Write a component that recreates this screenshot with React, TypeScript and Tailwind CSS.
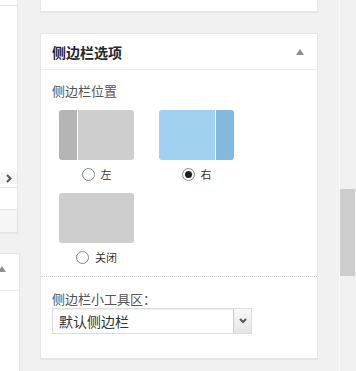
import React from "react";

function Radio({ checked }: { checked?: boolean }) {
  return (
    <span className="flex h-[13px] w-[13px] shrink-0 items-center justify-center rounded-full border border-[#7e8993] bg-white">
      {checked && <span className="h-[7px] w-[7px] rounded-full bg-[#1e1e1e]" />}
    </span>
  );
}

function Option({
  label,
  checked,
  variant,
}: {
  label: string;
  checked?: boolean;
  variant: "left" | "right" | "none";
}) {
  return (
    <div className="flex w-[75px] flex-col items-center">
      {variant === "left" && (
        <div className="flex h-[50px] w-[75px] overflow-hidden rounded-[3px]">
          <div className="w-[18px] bg-[#b4b4b4]" />
          <div className="w-[1px] bg-white" />
          <div className="flex-1 bg-[#cecece]" />
        </div>
      )}
      {variant === "right" && (
        <div className="flex h-[50px] w-[75px] overflow-hidden rounded-[3px]">
          <div className="flex-1 bg-[#a0d1f0]" />
          <div className="w-[1px] bg-white" />
          <div className="w-[18px] bg-[#85b9db]" />
        </div>
      )}
      {variant === "none" && <div className="h-[50px] w-[75px] rounded-[3px] bg-[#cecece]" />}
      <div className="mt-[6px] flex h-[16px] items-center gap-[6px]">
        <Radio checked={checked} />
        <span className="text-[11px] leading-[16px] text-[#333]">{label}</span>
      </div>
    </div>
  );
}

export default function App() {
  return (
    <div className="flex h-[371px] w-[356px] overflow-hidden bg-[#f1f1f1] font-['Noto_Sans_CJK_SC','Noto_Sans',sans-serif]">
      {/* left column */}
      <div className="flex w-[20px] shrink-0 flex-col">
        <div className="flex w-[18px] flex-col border-b border-r border-[#e5e5e5] bg-white shadow-[0_1px_1px_rgba(0,0,0,0.04)]">
          <div className="h-[6px] border-b border-[#e5e5e5]" />
          <div className="h-[166px]" />
          <div className="flex h-[12px] items-center justify-end bg-[#f5f5f5] pr-[5px]">
            <svg width="6" height="9" viewBox="0 0 6 9">
              <path d="M1 1 L4.5 4.5 L1 8" fill="none" stroke="#555" strokeWidth="2" />
            </svg>
          </div>
          <div className="h-[4px] border-b border-[#e5e5e5]" />
          <div className="h-[22px] border-b border-[#e5e5e5]" />
          <div className="h-[22px] bg-[#f6f6f6]" />
        </div>
        <div className="mt-[20px] flex w-[20px] flex-1 flex-col border-r border-t border-[#e5e5e5] bg-white">
          <div className="h-[37px] border-b border-[#eeeeee] pt-[12px]">
            <svg width="8" height="6" viewBox="0 0 8 6" className="ml-[-2px]">
              <polygon points="4,0 8,6 0,6" fill="#8c9196" />
            </svg>
          </div>
        </div>
      </div>

      {/* main column */}
      <div className="ml-[20px] flex w-[278px] shrink-0 flex-col">
        <div className="h-[12px] border-x border-b border-[#e5e5e5] bg-white shadow-[0_1px_1px_rgba(0,0,0,0.04)]" />
        <div className="mt-[21px] border border-[#e5e5e5] bg-white shadow-[0_1px_1px_rgba(0,0,0,0.04)]">
          <div className="flex h-[36px] items-center justify-between border-b border-[#eeeeee] pl-[11px] pr-[13px]">
            <span className="text-[14px] font-bold leading-[20px] text-[#23282d]">侧边栏选项</span>
            <svg width="8" height="6" viewBox="0 0 8 6">
              <polygon points="4,0 8,6 0,6" fill="#8c9196" />
            </svg>
          </div>
          <div className="pl-[11px] pt-[11px]">
            <div className="text-[13px] leading-[20px] text-[#555]">侧边栏位置</div>
          </div>
          <div className="mt-[9px] grid grid-cols-[100px_100px] gap-y-[11px] pl-[18px]">
            <Option label="左" variant="left" />
            <Option label="右" variant="right" checked />
            <Option label="关闭" variant="none" />
          </div>
          <div className="mt-[11px] border-t border-dotted border-[#cccccc] px-[11px] pb-[24px] pt-[13px]">
            <div className="text-[13px] leading-[18px] text-[#555]">侧边栏小工具区：</div>
            <div className="flex h-[26px] w-[200px] items-stretch border border-[#dddddd] bg-white shadow-[inset_0_1px_2px_rgba(0,0,0,0.07)]">
              <span className="flex flex-1 items-center pl-[6px] text-[14px] leading-[20px] text-[#333]">
                默认侧边栏
              </span>
              <span className="flex w-[18px] items-center justify-center border-l border-[#cccccc] bg-gradient-to-b from-[#f8f8f8] to-[#e6e6e6]">
                <svg width="8" height="6" viewBox="0 0 8 6">
                  <path d="M1 1 L4 4 L7 1" fill="none" stroke="#555" strokeWidth="2" />
                </svg>
              </span>
            </div>
          </div>
        </div>
      </div>

      {/* scrollbar */}
      <div className="ml-[21px] flex w-[17px] shrink-0 flex-col border-l border-[#f8f8f8] bg-[#f0f0f0]">
        <div className="h-[189px]" />
        <div className="h-[87px] w-[15px] bg-[#cdcdcd]" />
      </div>
    </div>
  );
}
